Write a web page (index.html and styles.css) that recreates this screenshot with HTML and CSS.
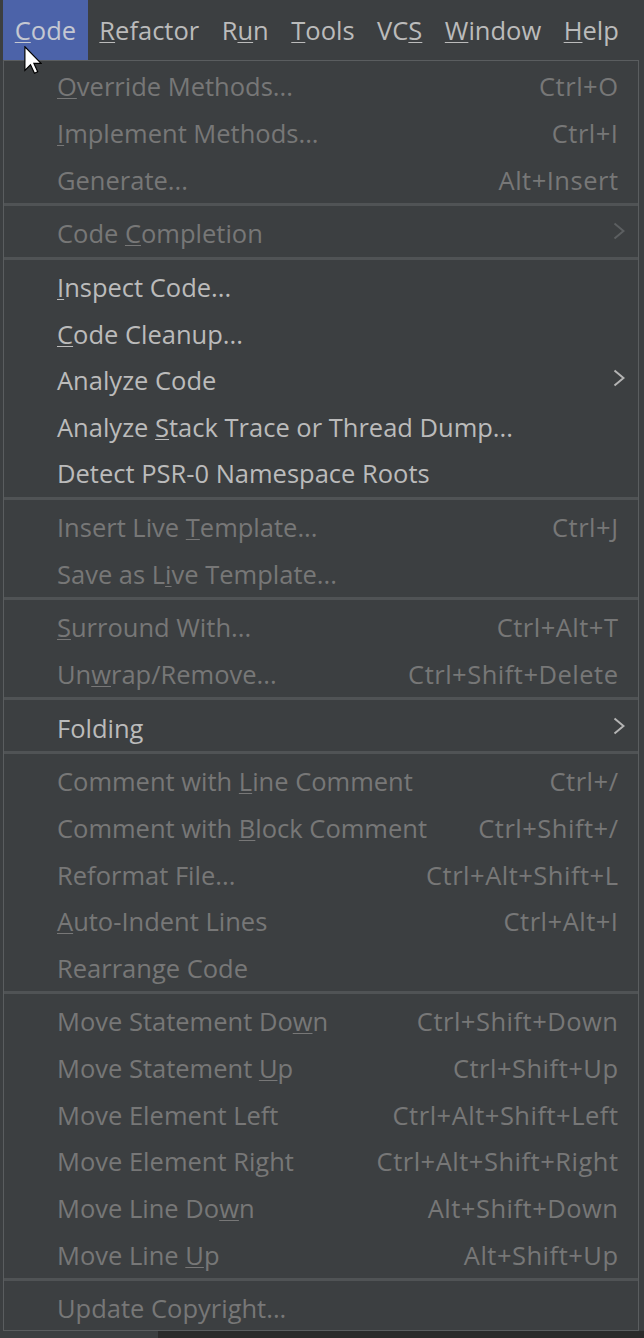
FILE: index.html
```html
<!DOCTYPE html>
<html>
<head>
<meta charset="utf-8">
<link rel="stylesheet" href="styles.css">
</head>
<body>
<div class="screen">
  <nav class="menubar">
    <span class="mb active"><u>C</u>ode</span>
    <span class="mb"><u>R</u>efactor</span>
    <span class="mb">R<u>u</u>n</span>
    <span class="mb"><u>T</u>ools</span>
    <span class="mb">VC<u>S</u></span>
    <span class="mb"><u>W</u>indow</span>
    <span class="mb"><u>H</u>elp</span>
  </nav>
  <div class="popup">
    <div class="item dis"><span class="label"><u>O</u>verride Methods...</span><span class="key">Ctrl+O</span></div>
    <div class="item dis"><span class="label"><u>I</u>mplement Methods...</span><span class="key">Ctrl+I</span></div>
    <div class="item dis"><span class="label">Generate...</span><span class="key">Alt+Insert</span></div>
    <div class="sep"></div>
    <div class="item dis"><span class="label">Code <u>C</u>ompletion</span><svg class="arrow" viewBox="0 0 12 18"><path d="M1.5 1.5 L10.5 9 L1.5 16.5"/></svg></div>
    <div class="sep"></div>
    <div class="item"><span class="label"><u>I</u>nspect Code...</span></div>
    <div class="item"><span class="label"><u>C</u>ode Cleanup...</span></div>
    <div class="item"><span class="label">Analyze Code</span><svg class="arrow" viewBox="0 0 12 18"><path d="M1.5 1.5 L10.5 9 L1.5 16.5"/></svg></div>
    <div class="item"><span class="label">Analyze <u>S</u>tack Trace or Thread Dump...</span></div>
    <div class="item"><span class="label">Detect PSR-0 Namespace Roots</span></div>
    <div class="sep"></div>
    <div class="item dis"><span class="label">Insert Live <u>T</u>emplate...</span><span class="key">Ctrl+J</span></div>
    <div class="item dis"><span class="label">Save as L<u>i</u>ve Template...</span></div>
    <div class="sep"></div>
    <div class="item dis"><span class="label"><u>S</u>urround With...</span><span class="key">Ctrl+Alt+T</span></div>
    <div class="item dis"><span class="label">Un<u>w</u>rap/Remove...</span><span class="key">Ctrl+Shift+Delete</span></div>
    <div class="sep"></div>
    <div class="item"><span class="label">Folding</span><svg class="arrow" viewBox="0 0 12 18"><path d="M1.5 1.5 L10.5 9 L1.5 16.5"/></svg></div>
    <div class="sep"></div>
    <div class="item dis"><span class="label">Comment with <u>L</u>ine Comment</span><span class="key">Ctrl+/</span></div>
    <div class="item dis"><span class="label">Comment with <u>B</u>lock Comment</span><span class="key">Ctrl+Shift+/</span></div>
    <div class="item dis"><span class="label">Reformat File...</span><span class="key">Ctrl+Alt+Shift+L</span></div>
    <div class="item dis"><span class="label"><u>A</u>uto-Indent Lines</span><span class="key">Ctrl+Alt+I</span></div>
    <div class="item dis"><span class="label">Rearrange Code</span></div>
    <div class="sep"></div>
    <div class="item dis"><span class="label">Move Statement Do<u>w</u>n</span><span class="key">Ctrl+Shift+Down</span></div>
    <div class="item dis"><span class="label">Move Statement <u>U</u>p</span><span class="key">Ctrl+Shift+Up</span></div>
    <div class="item dis"><span class="label">Move Element Left</span><span class="key">Ctrl+Alt+Shift+Left</span></div>
    <div class="item dis"><span class="label">Move Element Right</span><span class="key">Ctrl+Alt+Shift+Right</span></div>
    <div class="item dis"><span class="label">Move Line Do<u>w</u>n</span><span class="key">Alt+Shift+Down</span></div>
    <div class="item dis"><span class="label">Move Line <u>U</u>p</span><span class="key">Alt+Shift+Up</span></div>
    <div class="sep"></div>
    <div class="item dis"><span class="label">Update Copyright...</span></div>
  </div>
  <div class="bottom"><div class="bottom-left"></div></div>
  <svg class="cursor" viewBox="0 0 12 19"><path d="M0.5 0.5 L0.5 16.5 L4.3 12.8 L7 18.5 L9.2 17.5 L6.6 11.8 L11.5 11.8 Z"/></svg>
</div>
</body>
</html>
```

FILE: styles.css
```css
html, body {
  margin: 0;
  padding: 0;
  background: #3c3f41;
}

.screen {
  position: relative;
  width: 644px;
  height: 1338px;
  overflow: hidden;
  background: #3c3f41;
  font-family: "Open Sans", "Noto Sans", sans-serif;
  font-size: 25.5px;
  color: #bbbbbb;
}

u {
  text-decoration: underline;
  text-decoration-thickness: 1px;
  text-underline-offset: 2px;
  text-decoration-skip-ink: none;
}

.menubar {
  display: flex;
  height: 60px;
  padding-left: 3px;
  box-sizing: border-box;
}

.mb {
  display: flex;
  align-items: center;
  padding: 0 11.25px;
  height: 60px;
  color: #bbbbbb;
}

.mb.active {
  background: #4c63a9;
  color: #c4c8d2;
  padding: 0 12px 0 11.75px;
}

.popup {
  margin-left: 3px;
  width: 636px;
  box-sizing: border-box;
  border: 1px solid #5a5d5f;
  background: #3c3f41;
}

.item {
  display: flex;
  align-items: center;
  height: 46.65px;
  box-sizing: border-box;
  padding: 0 20px 0 53px;
  color: #bbbbbb;
  white-space: nowrap;
}

.item .label {
  flex: 1;
  padding-top: 4px;
}

.item .key {
  padding-top: 4px;
  letter-spacing: 0.5px;
  margin-right: -0.5px;
}

.item.dis {
  color: #777777;
}

.arrow {
  width: 12px;
  height: 18px;
  margin-right: -7px;
  fill: none;
  stroke: #b4b4b4;
  stroke-width: 2;
}

.item.dis .arrow {
  stroke: #5c5f61;
}

.sep {
  height: 3px;
  margin: 2px 0;
  background: #505355;
}

.bottom {
  display: flex;
  height: 7px;
  background: #2b2b2b;
}

.bottom-left {
  width: 158px;
  background: #3c3f41;
}

.cursor {
  position: absolute;
  left: 24px;
  top: 46px;
  width: 18px;
  height: 28px;
  fill: #ffffff;
  stroke: #000000;
  stroke-width: 0.8;
}
```
